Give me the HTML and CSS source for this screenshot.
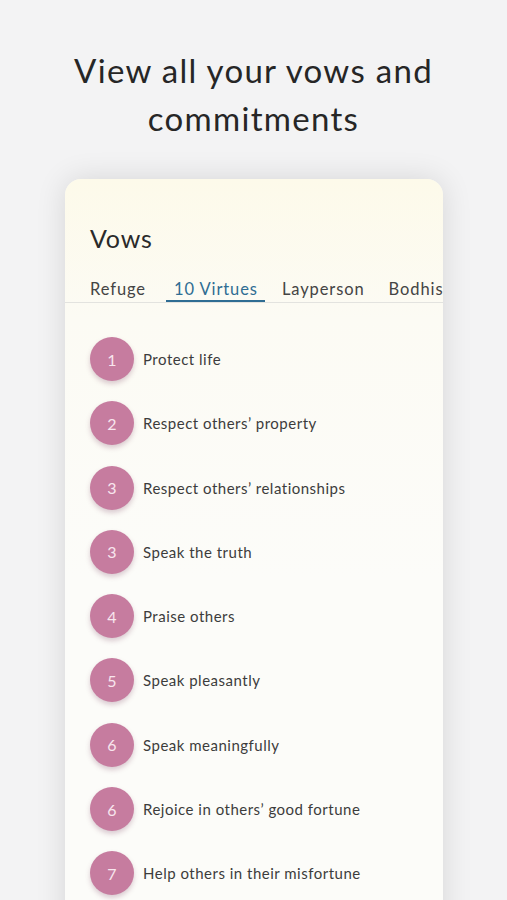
FILE: index.html
```html
<!DOCTYPE html>
<html lang="en">
<head>
<meta charset="utf-8">
<title>Vows</title>
<link rel="stylesheet" href="styles.css">
</head>
<body>
<main class="screen">
  <h1 class="headline">View all your vows and<br>commitments</h1>
  <section class="card">
    <h2 class="card-title">Vows</h2>
    <nav class="tabs">
      <span class="tab">Refuge</span>
      <span class="tab active">10 Virtues</span>
      <span class="tab wide">Layperson</span>
      <span class="tab">Bodhisattva</span>
    </nav>
    <ul class="list">
      <li class="item"><span class="num">1</span><span class="label">Protect life</span></li>
      <li class="item"><span class="num">2</span><span class="label">Respect others’ property</span></li>
      <li class="item"><span class="num">3</span><span class="label">Respect others’ relationships</span></li>
      <li class="item"><span class="num">3</span><span class="label">Speak the truth</span></li>
      <li class="item"><span class="num">4</span><span class="label">Praise others</span></li>
      <li class="item"><span class="num">5</span><span class="label">Speak pleasantly</span></li>
      <li class="item"><span class="num">6</span><span class="label">Speak meaningfully</span></li>
      <li class="item"><span class="num">6</span><span class="label">Rejoice in others’ good fortune</span></li>
      <li class="item"><span class="num">7</span><span class="label">Help others in their misfortune</span></li>
    </ul>
  </section>
</main>
</body>
</html>
```

FILE: styles.css
```css
* { box-sizing: border-box; }
html, body {
  margin: 0;
  padding: 0;
  height: 900px;
  overflow: hidden;
  background: #f3f3f4;
  font-family: "Lato", "Noto Sans", sans-serif;
  color: #2b2b2b;
}
.screen {
  display: flex;
  flex-direction: column;
  align-items: center;
}
.headline {
  margin: 46px 0 0;
  font-size: 33px;
  line-height: 48px;
  font-weight: 400;
  text-align: center;
  letter-spacing: 1.3px;
  color: #262626;
}
.card {
  margin-top: 37px;
  width: 378px;
  margin-left: 1px;
  height: 760px;
  border-radius: 16px;
  background: linear-gradient(180deg, #fdfaea 0px, #fcfbf4 140px, #fcfcf9 400px);
  box-shadow: 0 0 30px rgba(0, 0, 0, 0.12);
  overflow: hidden;
}
.card-title {
  margin: 44px 0 0 25px;
  font-size: 25px;
  line-height: 30px;
  font-weight: 400;
  letter-spacing: 0.8px;
  color: #2a2a2a;
}
.tabs {
  display: flex;
  margin-top: 25px;
  padding-left: 25px;
  border-bottom: 1px solid #e3e3df;
  white-space: nowrap;
  overflow: hidden;
}
.tab {
  font-size: 16.5px;
  line-height: 22px;
  padding-bottom: 2px;
  margin-right: 20px;
  color: #444;
  letter-spacing: 0.9px;
  flex-shrink: 0;
}
.tab.active {
  color: #2f6d93;
  border-bottom: 2px solid #2f6d93;
  padding: 0 7px 0 8px;
  margin-right: 17px;
}
.tab.wide {
  margin-right: 24px;
}
.list {
  list-style: none;
  margin: 34px 0 0;
  padding: 0 0 0 25px;
  display: flex;
  flex-direction: column;
  gap: 20.3px;
}
.item {
  display: flex;
  align-items: center;
  height: 44px;
}
.num {
  width: 44px;
  height: 44px;
  border-radius: 50%;
  background: #c67c9f;
  color: #f8e6ee;
  display: flex;
  align-items: center;
  justify-content: center;
  font-size: 16px;
  box-shadow: 0 3px 5px rgba(120, 60, 90, 0.25);
  flex-shrink: 0;
}
.label {
  margin-left: 9px;
  font-size: 15px;
  color: #3c3c3c;
  letter-spacing: 0.5px;
}
```
